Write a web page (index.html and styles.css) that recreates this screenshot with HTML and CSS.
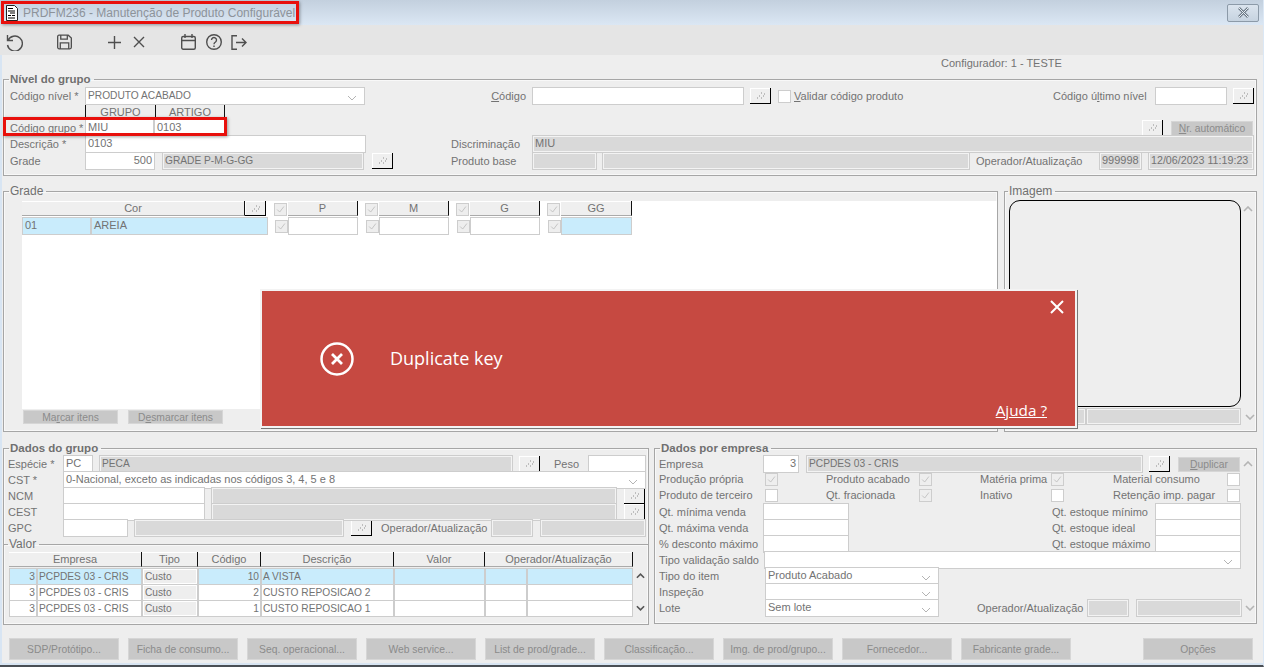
FILE: index.html
```html
<!DOCTYPE html>
<html lang="pt-BR">
<head>
    <meta charset="UTF-8">
    <title>PRDFM236 - Manutenção de Produto Configurável</title>
    <link rel="stylesheet" href="styles.css">
</head>
<body>
    <svg class="defs" width="0" height="0">
        <symbol id="dots" viewBox="0 0 9 7"><path d="M1 6h1M3 4h1M5 1h1M5 6h1M7 4h1M8 2h1" stroke="#8c8c8c" fill="none"/></symbol>
        <symbol id="chev" viewBox="0 0 10 6"><path d="M1 1l4 4 4-4" stroke="#b4b4b4" fill="none"/></symbol>
        <symbol id="up" viewBox="0 0 10 6"><polyline points="1,5 5,1 9,5" stroke="#b4b4b4" stroke-width="1.600" fill="none"/></symbol>
        <symbol id="down" viewBox="0 0 10 6"><polyline points="1,1 5,5 9,1" stroke="#b4b4b4" stroke-width="1.600" fill="none"/></symbol>
        <symbol id="up-dark" viewBox="0 0 10 6"><polyline points="1,5 5,1 9,5" stroke="#555" stroke-width="1.800" fill="none"/></symbol>
        <symbol id="down-dark" viewBox="0 0 10 6"><polyline points="1,1 5,5 9,1" stroke="#555" stroke-width="1.800" fill="none"/></symbol>
        <symbol id="check" viewBox="0 0 13 13"><path d="M2.500 6.500l3 3 5-6.500" stroke="#bdbdbd" fill="none"/></symbol>
    </svg>

    <div class="window">
        <div class="titlebar">
            <svg class="doc-icon" viewBox="0 0 13 16"><path d="M1.500.5h8l3 3v12h-11z" fill="#fff" stroke="#222"/><path d="M3 3.500h5M3 6h7M5 8h5M3 10.500h3M7 10.500h3M3 13h7" stroke="#000" stroke-width="1.200"/></svg>
            <span class="title-text">PRDFM236 - Manutenção de Produto Configurável</span>
            <button class="win-close"><svg viewBox="0 0 13 11" width="13" height="11"><path d="M2 1l9 9M11 1l-9 9" stroke="#6d7a86" stroke-width="2.600"/><path d="M2 1l9 9M11 1l-9 9" stroke="#e6edf4" stroke-width="1"/></svg></button>
        </div>

        <div class="toolbar">
            <svg class="tool tool-undo" viewBox="0 0 18 18"><path d="M2.500 2v5.500H8M3 7.500A7.500 7.500 0 1 1 2.500 12"/></svg>
            <svg class="tool tool-save" viewBox="0 0 16 16"><path d="M2 .7h10l3.300 3v10a1.600 1.600 0 0 1-1.600 1.600H2.300A1.600 1.600 0 0 1 .7 13.700V2.300A1.600 1.600 0 0 1 2 .7zM4 1v4h7V1M3.500 15V9h9v6"/></svg>
            <svg class="tool tool-plus" viewBox="0 0 13 13"><path d="M6.500 0v13M0 6.500h13"/></svg>
            <svg class="tool tool-close" viewBox="0 0 12 12"><path d="M1 1l10 10M11 1L1 11"/></svg>
            <svg class="tool tool-cal" viewBox="0 0 15 16"><rect x=".7" y="2.500" width="13.600" height="12.800" rx="1.500"/><path d="M.7 6.500h13.600M4 0v4M11 0v4"/></svg>
            <svg class="tool tool-help" viewBox="0 0 16 16"><circle cx="8" cy="8" r="7.300"/><path d="M5.500 6a2.500 2.500 0 1 1 4 2c-1 .7-1.500 1.200-1.500 2.300M8 11.500v1.500"/></svg>
            <svg class="tool tool-exit" viewBox="0 0 16 15"><path d="M6 .7H1v13.600h5M5 7.500h10M11 3.500l4 4-4 4"/></svg>
        </div>

        <div class="config-line">Configurador: 1 - TESTE</div>

        <fieldset class="group nivel">
            <legend class="strong">Nível do grupo</legend>
            <div class="row r-nivel">
                <label>Código nível *</label>
                <div class="fld sel caps">PRODUTO ACABADO<svg class="chev"><use href="#chev"/></svg></div>
                <label class="right"><u>C</u>ódigo</label>
                <div class="fld"></div>
                <div class="btn"><svg class="dots"><use href="#dots"/></svg></div>
                <div class="ck"></div>
                <label class="ml3"><u>V</u>alidar código produto</label>
                <label>Código ú<u>l</u>timo nível</label>
                <div class="fld"></div>
                <div class="btn"><svg class="dots"><use href="#dots"/></svg></div>
            </div>
            <div class="row r-head">
                <span></span>
                <div class="col-head">GRUPO</div>
                <div class="col-head">ARTIGO</div>
            </div>
            <div class="row r-grupo">
                <label>Código <u>g</u>rupo *</label>
                <div class="fld">MIU</div>
                <div class="fld">0103</div>
                <div class="btn"><svg class="dots"><use href="#dots"/></svg></div>
                <div class="action ml8"><u>N</u>r. automático</div>
            </div>
            <div class="row r-desc">
                <label>Descrição *</label>
                <div class="fld">0103</div>
                <span></span>
                <label>Discriminação</label>
                <div class="fld off">MIU</div>
            </div>
            <div class="row r-grade">
                <label>Grade</label>
                <div class="fld num">500</div>
                <div class="fld off ml7 caps">GRADE P-M-G-GG</div>
                <div class="btn"><svg class="dots"><use href="#dots"/></svg></div>
                <span></span>
                <label>Produto base</label>
                <div class="fld off"></div>
                <div class="fld off ml5"></div>
                <label class="ml6">Operador/Atualização</label>
                <div class="fld off">999998</div>
                <div class="fld off ml6 stamp">12/06/2023 11:19:23</div>
            </div>
        </fieldset>

        <div class="mid-row">
            <fieldset class="group grade">
                <legend>Grade</legend>
                <div class="grade-area">
                    <div class="grade-head">
                        <div class="th">Cor</div>
                        <div class="btn grade-btn"><svg class="dots"><use href="#dots"/></svg></div>
                        <div class="ck on"><svg><use href="#check"/></svg></div>
                        <div class="th">P</div>
                        <div class="ck on"><svg><use href="#check"/></svg></div>
                        <div class="th">M</div>
                        <div class="ck on"><svg><use href="#check"/></svg></div>
                        <div class="th">G</div>
                        <div class="ck on"><svg><use href="#check"/></svg></div>
                        <div class="th">GG</div>
                    </div>
                    <div class="grade-line">
                        <div class="fld blue">01</div>
                        <div class="fld blue">AREIA</div>
                        <div class="ck on"><svg><use href="#check"/></svg></div>
                        <div class="fld"></div>
                        <div class="ck on"><svg><use href="#check"/></svg></div>
                        <div class="fld"></div>
                        <div class="ck on"><svg><use href="#check"/></svg></div>
                        <div class="fld"></div>
                        <div class="ck on"><svg><use href="#check"/></svg></div>
                        <div class="fld blue"></div>
                    </div>
                </div>
                <div class="grade-actions">
                    <div class="action">Ma<u>r</u>car itens</div>
                    <div class="action">D<u>e</u>smarcar itens</div>
                </div>
            </fieldset>

            <fieldset class="group imagem">
                <legend>Imagem</legend>
                <div class="img-wrap">
                    <div class="img-box"></div>
                    <svg class="scroll-arrow"><use href="#up"/></svg>
                </div>
                <div class="img-foot">
                    <div class="fld off"></div>
                    <div class="fld off"></div>
                    <svg class="scroll-arrow"><use href="#down"/></svg>
                </div>
            </fieldset>
        </div>

        <div class="data-row">
            <fieldset class="group dados">
                <legend class="strong">Dados do grupo</legend>
                <div class="row r-especie">
                    <label>Espécie *</label>
                    <div class="fld">PC</div>
                    <div class="fld off ml6 caps">PECA</div>
                    <div class="btn"><svg class="dots"><use href="#dots"/></svg></div>
                    <span></span>
                    <label>Peso</label>
                    <div class="fld"></div>
                </div>
                <div class="row r-cst">
                    <label>CST *</label>
                    <div class="fld sel">0-Nacional, exceto as indicadas nos códigos 3, 4, 5 e 8<svg class="chev"><use href="#chev"/></svg></div>
                </div>
                <div class="row r-ncm">
                    <label>NCM</label>
                    <div class="fld"></div>
                    <div class="fld off ml6"></div>
                    <div class="btn"><svg class="dots"><use href="#dots"/></svg></div>
                </div>
                <div class="row r-ncm">
                    <label>CEST</label>
                    <div class="fld"></div>
                    <div class="fld off ml6"></div>
                    <div class="btn"><svg class="dots"><use href="#dots"/></svg></div>
                </div>
                <div class="row r-gpc">
                    <label>GPC</label>
                    <div class="fld"></div>
                    <div class="fld off ml6"></div>
                    <div class="btn"><svg class="dots"><use href="#dots"/></svg></div>
                    <label class="ml9">Operador/Atualização</label>
                    <div class="fld off"></div>
                    <div class="fld off ml7"></div>
                </div>

                <fieldset class="group valor">
                    <legend>Valor</legend>
                    <div class="valor-table">
                        <div class="th span2">Empresa</div>
                        <div class="th">Tipo</div>
                        <div class="th">Código</div>
                        <div class="th">Descrição</div>
                        <div class="th">Valor</div>
                        <div class="th span2">Operador/Atualização</div>
                        <span></span>

                        <div class="cell blue num">3</div>
                        <div class="cell blue">PCPDES 03 - CRIS</div>
                        <div class="cell tipo">Custo</div>
                        <div class="cell blue num">10</div>
                        <div class="cell blue">A VISTA</div>
                        <div class="cell blue"></div>
                        <div class="cell blue"></div>
                        <div class="cell blue"></div>
                        <svg class="table-arrow"><use href="#up-dark"/></svg>

                        <div class="cell num">3</div>
                        <div class="cell">PCPDES 03 - CRIS</div>
                        <div class="cell tipo">Custo</div>
                        <div class="cell num">2</div>
                        <div class="cell">CUSTO REPOSICAO 2</div>
                        <div class="cell"></div>
                        <div class="cell"></div>
                        <div class="cell"></div>
                        <span></span>

                        <div class="cell num">3</div>
                        <div class="cell">PCPDES 03 - CRIS</div>
                        <div class="cell tipo">Custo</div>
                        <div class="cell num">1</div>
                        <div class="cell">CUSTO REPOSICAO 1</div>
                        <div class="cell"></div>
                        <div class="cell"></div>
                        <div class="cell"></div>
                        <svg class="table-arrow"><use href="#down-dark"/></svg>
                    </div>
                </fieldset>
            </fieldset>

            <fieldset class="group empresa">
                <legend class="strong">Dados por empresa</legend>
                <div class="row r-empresa">
                    <label>Empresa</label>
                    <div class="fld num">3</div>
                    <div class="fld off ml7 caps">PCPDES 03 - CRIS</div>
                    <div class="btn"><svg class="dots"><use href="#dots"/></svg></div>
                    <div class="action ml8"><u>D</u>uplicar</div>
                    <svg class="scroll-arrow"><use href="#up"/></svg>
                </div>
                <div class="row r-checks">
                    <label>Produção própria</label>
                    <div class="ck on"><svg><use href="#check"/></svg></div>
                    <span></span>
                    <label>Produto acabado</label>
                    <div class="ck on"><svg><use href="#check"/></svg></div>
                    <span></span>
                    <label>Matéria prima</label>
                    <div class="ck on"><svg><use href="#check"/></svg></div>
                    <span></span>
                    <label>Material consumo</label>
                    <div class="ck"></div>
                </div>
                <div class="row r-checks">
                    <label>Produto de terceiro</label>
                    <div class="ck"></div>
                    <span></span>
                    <label>Qt. fracionada</label>
                    <div class="ck on"><svg><use href="#check"/></svg></div>
                    <span></span>
                    <label>Inativo</label>
                    <div class="ck"></div>
                    <span></span>
                    <label>Retenção imp. pagar</label>
                    <div class="ck"></div>
                </div>
                <div class="row r-qty">
                    <label>Qt. mínima venda</label>
                    <div class="fld"></div>
                    <span></span>
                    <label>Qt. estoque mínimo</label>
                    <div class="fld"></div>
                </div>
                <div class="row r-qty">
                    <label>Qt. máxima venda</label>
                    <div class="fld"></div>
                    <span></span>
                    <label>Qt. estoque ideal</label>
                    <div class="fld"></div>
                </div>
                <div class="row r-qty">
                    <label>% desconto máximo</label>
                    <div class="fld"></div>
                    <span></span>
                    <label>Qt. estoque máximo</label>
                    <div class="fld"></div>
                </div>
                <div class="row r-saldo">
                    <label>Tipo validação saldo</label>
                    <div class="fld sel"><svg class="chev"><use href="#chev"/></svg></div>
                </div>
                <div class="row r-tipo">
                    <label>Tipo do item</label>
                    <div class="fld sel">Produto Acabado<svg class="chev"><use href="#chev"/></svg></div>
                </div>
                <div class="row r-tipo">
                    <label>Inspeção</label>
                    <div class="fld sel"><svg class="chev"><use href="#chev"/></svg></div>
                </div>
                <div class="row r-lote">
                    <label>Lote</label>
                    <div class="fld sel">Sem lote<svg class="chev"><use href="#chev"/></svg></div>
                    <span></span>
                    <label>Operador/Atualização</label>
                    <div class="fld off"></div>
                    <div class="fld off ml7"></div>
                    <svg class="scroll-arrow"><use href="#down"/></svg>
                </div>
            </fieldset>
        </div>

        <div class="footer-btns">
            <div class="action">SDP/Protótipo...</div>
            <div class="action">Ficha de consumo...</div>
            <div class="action">Seq. operacional...</div>
            <div class="action">Web service...</div>
            <div class="action">List de prod/grade...</div>
            <div class="action">Classificação...</div>
            <div class="action">Img. de prod/grupo...</div>
            <div class="action">Fornecedor...</div>
            <div class="action">Fabricante grade...</div>
            <div class="action opcoes">Opções</div>
        </div>

        <!-- marcacoes vermelhas por cima da tela -->
        <div class="mark mark-title"></div>
        <div class="mark mark-grupo"></div>

        <div class="toast">
            <svg class="toast-icon" viewBox="0 0 34 34"><circle cx="17" cy="17" r="15.500"/><path d="M12 12l10 10M22 12L12 22"/></svg>
            <span class="toast-text">Duplicate key</span>
            <svg class="toast-close" viewBox="0 0 14 14"><path d="M1 1l12 12M13 1L1 13"/></svg>
            <a class="toast-help" href="#">Ajuda ?</a>
        </div>
    </div>
</body>
</html>
```

FILE: styles.css
```css
* {
    box-sizing: border-box;
}

body {
    margin: 0;
    background: #fff;
    font-family: 'Liberation Sans', Arial, sans-serif;
    font-size: 11px;
    color: #737373;
}

.defs {
    position: absolute;
}

.window {
    position: relative;
    width: 1264px;
    height: 667px;
    display: flex;
    flex-direction: column;
    padding-left: 2px;
    background: #eeeeee;
    border-bottom: 2px solid #4a4f55;
    border-right: 1px solid #dce8f5;
    overflow: hidden;
}

.window::before {
    content: '';
    position: absolute;
    left: 0;
    top: 25px;
    bottom: 0;
    width: 2px;
    background: #d8e5f3;
}

.window::after {
    content: '';
    position: absolute;
    left: 0;
    right: 0;
    bottom: 0;
    height: 2px;
    background: #d8e5f3;
}

/* barra de titulo */
.titlebar {
    height: 25px;
    margin-left: -2px;
    flex: none;
    display: flex;
    align-items: center;
    background: linear-gradient(#c3d0de, #dbe7f4);
}

.doc-icon {
    width: 13px;
    height: 16px;
    margin-left: 5px;
}

.title-text {
    margin-left: 5px;
    font-size: 12px;
    color: #8d939a;
}

.win-close {
    width: 32px;
    height: 18px;
    margin-left: auto;
    margin-right: 4px;
    padding: 0;
    display: flex;
    align-items: center;
    justify-content: center;
    border: 1px solid #8c9aa8;
    border-radius: 2px;
    background: linear-gradient(#dbe4ee, #c6d3e0);
}

/* barra de ferramentas */
.toolbar {
    position: relative;
    height: 30px;
    margin-left: -2px;
    padding-top: 4px;
    flex: none;
    display: flex;
    align-items: center;
    background: #e5e5e5;
}

.tool {
    flex: none;
    fill: none;
    stroke: #4f4f4f;
    stroke-width: 1.400;
}

.tool-undo { width: 18px; height: 18px; margin-left: 5px; }
.tool-save { width: 15px; height: 16px; margin-left: 34px; }
.tool-plus { width: 13px; height: 13px; margin-left: 36px; }
.tool-close { width: 12px; height: 12px; margin-left: 12px; }
.tool-cal { width: 15px; height: 16px; margin-left: 36px; }
.tool-help { width: 16px; height: 16px; margin-left: 10px; }
.tool-exit { width: 16px; height: 15px; margin-left: 9px; }

.config-line {
    height: 18px;
    flex: none;
    padding-left: 939px;
    line-height: 17px;
}

/* grupos */
.group {
    margin: 0;
    padding: 0;
    min-width: 0;
    border: 1px solid #a6a6a6;
    box-shadow: 0 0 0 1px #f8f8f8 inset;
}

.group legend {
    margin-left: -1px;
    padding: 0 3px 0 1px;
    height: 13px;
    line-height: 13px;
    font-size: 12px;
    color: #707070;
}

.group legend.strong {
    font-weight: bold;
    font-size: 11.500px;
}

.nivel {
    height: 103px;
    margin-left: 1px;
    margin-right: 6px;
    flex: none;
    padding-left: 6px;
}

.row {
    display: grid;
    height: 16px;
    align-items: center;
    white-space: nowrap;
}

.row label {
    min-width: 0;
}

.right {
    text-align: right;
    padding-right: 6px;
}

.ml3 { margin-left: 3px; }
.ml5 { margin-left: 5px; }
.ml6 { margin-left: 6px; }
.ml7 { margin-left: 7px; }
.ml8 { margin-left: 8px; }
.ml9 { margin-left: 9px; }

.r-nivel {
    height: 18px;
    margin-top: 1px;
    grid-template-columns: 75px 280px 167px 212px 27px 20px 262px 102px 72px 27px;
}

.r-head {
    height: 14px;
    grid-template-columns: 75px 70px 70px;
    align-items: stretch;
}

.r-grupo {
    grid-template-columns: 75px 69px 71px 938px 90px;
}

.r-desc {
    height: 17px;
    grid-template-columns: 75px 281px 85px 81px 722px;
}

.r-grade {
    height: 17px;
    grid-template-columns: 75px 70px 209px 29px 58px 81px 65px 373px 129px 43px 112px;
}

/* campos */
.fld {
    position: relative;
    height: 18px;
    padding: 0 2px;
    line-height: 15px;
    background: #fff;
    border: 1px solid #cdcdcd;
    overflow: hidden;
    white-space: nowrap;
    min-width: 0;
}

.off {
    background: #d9d9d9;
    box-shadow: 0 0 0 1px #f3f3f3 inset;
}

.caps {
    font-size: 10.200px;
}

.stamp {
    font-size: 10.700px;
}

.num {
    text-align: right;
}

.blue {
    background: #c9ecfc;
}

.chev {
    position: absolute;
    right: 7px;
    top: 7px;
    width: 10px;
    height: 6px;
}

.btn {
    width: 21px;
    height: 16px;
    justify-self: end;
    display: flex;
    align-items: center;
    justify-content: center;
    background: #efefef;
    border-right: 1px solid #000;
    border-bottom: 1px solid #000;
    box-shadow: 1px 1px 0 #fff inset;
}

.dots {
    width: 9px;
    height: 7px;
}

.ck {
    width: 13px;
    height: 13px;
    justify-self: end;
    background: #fff;
    border: 1px solid #cdcdcd;
}

.ck.on {
    background: #eeeeee;
}

.ck svg {
    display: block;
    width: 11px;
    height: 11px;
}

.col-head {
    text-align: center;
    line-height: 15px;
    border-left: 1px solid #111;
}

.col-head:last-child {
    border-right: 1px solid #111;
}

.action {
    display: flex;
    align-items: center;
    justify-content: center;
    height: 15px;
    font-size: 10.300px;
    background: #c8c8c8;
    border: 1px solid #d6d6d6;
    color: #8b8b8b;
    white-space: nowrap;
}

/* meio: grade e imagem */
.mid-row {
    display: flex;
    flex: none;
    height: 247px;
    margin: 9px 6px 0 1px;
    gap: 6px;
}

.grade {
    width: 995px;
    flex: none;
    padding-left: 18px;
}

.grade legend {
    margin-left: -13px;
}

.grade-area {
    height: 208px;
    margin-top: 3px;
    background: #fff;
}

.grade-head,
.grade-line {
    display: grid;
    align-items: center;
    height: 16px;
    grid-template-columns: 223px 22px 21px 70px 21px 70px 21px 70px 21px 71px;
}

.grade-line {
    grid-template-columns: 69px 177px 20px 70px 21px 70px 21px 70px 21px 71px;
}

.th {
    height: 15px;
    line-height: 14px;
    align-self: start;
    text-align: center;
    background: #efefef;
    border-right: 1px solid #111;
    border-bottom: 1px solid #aaa;
    box-shadow: 0 1px 0 #fff inset;
}

.grade-btn {
    justify-self: start;
    align-self: start;
    height: 15px;
}

.grade-head .ck {
    margin-right: 1px;
}

.grade-actions {
    display: flex;
    gap: 10px;
    margin-top: 1px;
    padding-left: 1px;
}

.grade-actions .action {
    width: 95px;
    height: 14px;
}

.imagem {
    flex: 1;
    padding-left: 4px;
}

.img-wrap {
    display: flex;
    height: 207px;
    margin-top: 2px;
}

.img-box {
    width: 232px;
    border: 1px solid #000;
    border-radius: 11px;
    background: #eeeeee;
}

.scroll-arrow {
    flex: none;
    width: 10px;
    height: 6px;
    margin: 6px 0 0 2px;
}

.img-foot {
    display: grid;
    grid-template-columns: 77px 155px 14px;
    margin-top: 1px;
    align-items: center;
}

.img-foot .fld {
    height: 17px;
}

.img-foot .scroll-arrow {
    margin-top: 0;
    margin-left: 4px;
}

/* dados */
.data-row {
    display: flex;
    flex: none;
    height: 182px;
    margin: 10px 6px 0 1px;
    gap: 5px;
}

.dados {
    width: 646px;
    flex: none;
    padding-left: 4px;
    border-bottom: 0;
    position: relative;
}

.dados > legend,
.empresa > legend {
    margin-left: 1px;
}

.r-especie { grid-template-columns: 55px 30px 420px 27px 14px 34px 58px; }
.r-cst { grid-template-columns: 55px 583px; }
.r-ncm { grid-template-columns: 55px 142px 412px 28px; }
.r-gpc { grid-template-columns: 55px 65px 216px 28px 119px 42px 113px; }

.valor {
    position: absolute;
    left: -1px;
    right: -1px;
    top: 83px;
    height: 87px;
    padding-left: 5px;
}

.valor-table {
    display: grid;
    margin-top: 1px;
    grid-template-columns: 28px 105px 56px 63px 133px 91px 42px 106px 14px;
    grid-auto-rows: 16px;
    align-items: center;
}

.valor-table .th {
    line-height: 15px;
}

.span2 {
    grid-column: span 2;
}

.cell {
    height: 17px;
    padding: 0 1px;
    line-height: 15px;
    font-size: 10.200px;
    background: #fff;
    border: 1px solid #cdcdcd;
    overflow: hidden;
    white-space: nowrap;
}

.cell.blue {
    background: #c9ecfc;
}

.tipo {
    background: #eeeeee;
    box-shadow: 0 0 0 1px #fff inset;
    padding-left: 2px;
}

.table-arrow {
    width: 9px;
    height: 6px;
    margin-left: 3px;
}

.empresa {
    flex: 1;
    padding-left: 4px;
}

.r-empresa { grid-template-columns: 104px 36px 344px 27px 70px 14px; }
.r-checks { grid-template-columns: 119px 0 48px 92px 14px 48px 70px 14px 49px 114px 13px; }
.r-qty { grid-template-columns: 104px 86px 203px 103px 86px; }
.r-saldo { grid-template-columns: 105px 477px; }
.r-tipo { grid-template-columns: 106px 174px; }
.r-lote { grid-template-columns: 106px 174px 38px 110px 42px 113px 14px; }

.r-empresa .action {
    height: 15px;
}

.r-empresa .scroll-arrow,
.r-lote .scroll-arrow {
    margin: 0 0 0 3px;
}

/* botoes do rodape */
.footer-btns {
    display: flex;
    flex: none;
    gap: 9px;
    margin-top: 14px;
    padding-left: 7px;
}

.footer-btns .action {
    width: 110px;
    height: 22px;
}

.footer-btns .opcoes {
    margin-left: 63px;
}

/* marcacoes */
.mark {
    position: absolute;
    border: 3px solid #e8100c;
    box-shadow: 1px 1px 3px rgba(0, 0, 0, 0.35);
}

.mark-title {
    left: 1px;
    top: 1px;
    width: 298px;
    height: 23px;
}

.mark-grupo {
    left: 3px;
    top: 117px;
    width: 224px;
    height: 19px;
}

/* mensagem de erro */
.toast {
    position: absolute;
    left: 260px;
    top: 289px;
    width: 817px;
    height: 139px;
    background: #c64941;
    border: 2px solid #f3f3f3;
    box-shadow: 1px 1px 0 #777;
    color: #fff;
}

.toast-icon {
    position: absolute;
    left: 58px;
    top: 51px;
    width: 34px;
    height: 34px;
    fill: none;
    stroke: #fff;
    stroke-width: 2.500;
}

.toast-icon path {
    stroke-width: 2.800;
}

.toast-text {
    position: absolute;
    left: 128px;
    top: 55px;
    font-family: 'Open Sans', sans-serif;
    font-size: 18px;
    line-height: 24px;
}

.toast-close {
    position: absolute;
    right: 11px;
    top: 9px;
    width: 14px;
    height: 14px;
    fill: none;
    stroke: #fff;
    stroke-width: 2;
}

.toast-help {
    position: absolute;
    right: 28px;
    bottom: 6px;
    font-family: 'Open Sans', sans-serif;
    font-size: 15.300px;
    line-height: 20px;
    color: #fff;
}
```
